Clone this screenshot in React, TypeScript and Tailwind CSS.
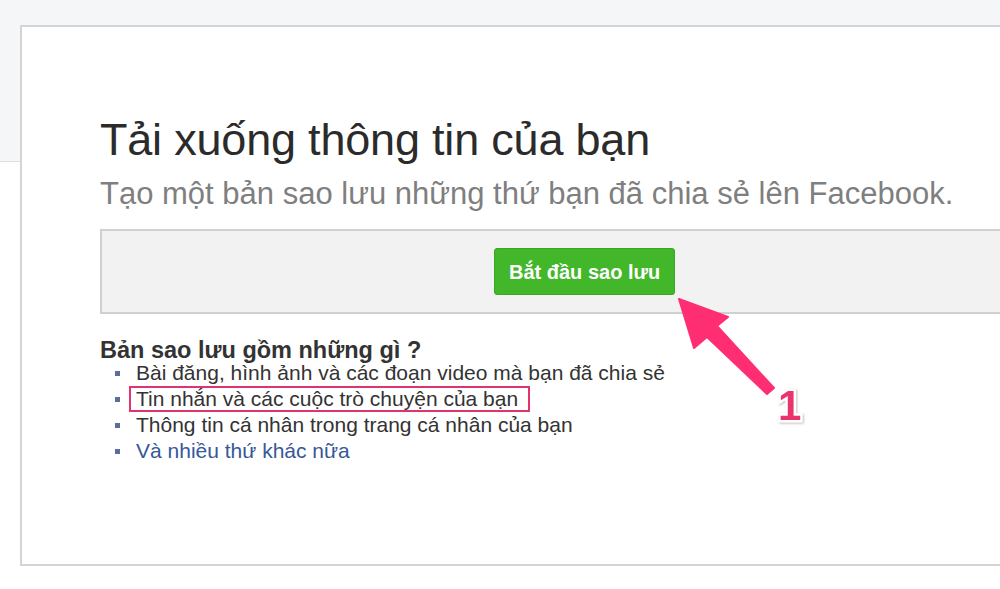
import React from 'react';

const items = [
  'Bài đăng, hình ảnh và các đoạn video mà bạn đã chia sẻ',
  'Tin nhắn và các cuộc trò chuyện của bạn',
  'Thông tin cá nhân trong trang cá nhân của bạn',
];

export default function App() {
  return (
    <div className="relative w-[1000px] h-[589px] overflow-hidden bg-white font-['Liberation_Sans',Arial,sans-serif]">
      <div className="h-[162px] bg-[#f5f6f7] border-b border-[#dddfe2]" />

      <div className="relative ml-[20px] mt-[-137px] w-[1000px] h-[541px] bg-white border-2 border-[#d4d4d4] pl-[78px] pt-[87px]">
        <h1 className="text-[45px] leading-[52px] text-[#2b2b2b] tracking-[-0.2px]">Tải xuống thông tin của bạn</h1>
        <p className="mt-[8px] text-[31px] leading-[40px] text-[#7f7f7f]">
          Tạo một bản sao lưu những thứ bạn đã chia sẻ lên Facebook.
        </p>

        <div className="mt-[15px] h-[85px] bg-[#f2f2f2] border-2 border-[#d0d0d0] flex items-start pt-[17px] pl-[392px]">
          <button className="h-[47px] px-[14px] rounded-[3px] bg-[#42b72a] border border-[#3aa625] text-white font-bold text-[20px]">
            Bắt đầu sao lưu
          </button>
        </div>

        <div className="mt-[23px] text-[#333]">
          <div className="font-bold text-[23.5px] leading-[26px]">Bản sao lưu gồm những gì ?</div>
          <ul className="text-[21px] leading-[26px] mt-[-3px]">
            {items.map((t, i) => (
              <li key={t} className="flex items-center pl-[15px]">
                <span className="w-[5px] h-[5px] bg-[#5a6f9c] mr-[16px]" />
                <span className={i === 1 ? 'ml-[-7px] pl-[5px] pr-[10px] border-2 border-[#e0336f] leading-[22px]' : ''}>{t}</span>
              </li>
            ))}
            <li className="flex items-center pl-[15px]">
              <span className="w-[5px] h-[5px] bg-[#5a6f9c] mr-[16px]" />
              <span className="text-[#365899]">Và nhiều thứ khác nữa</span>
            </li>
          </ul>
        </div>
      </div>

      <svg className="absolute left-0 top-0" width="1000" height="589" viewBox="0 0 1000 589">
        <polygon
          points="679,299 728,317 717,326 774,388 767,394 707,337 694,348"
          fill="#ff2e72"
          stroke="#ff2e72"
          strokeWidth="2"
          strokeLinejoin="round"
        />
        <text
          x="778"
          y="420"
          fontFamily="Liberation Sans, Arial, sans-serif"
          fontWeight="bold"
          fontSize="42"
          fill="#e8336d"
          stroke="#ffffff"
          strokeWidth="5"
          paintOrder="stroke"
          style={{ filter: 'drop-shadow(1px 1px 1px rgba(0,0,0,0.25))' }}
        >
          1
        </text>
      </svg>
    </div>
  );
}
